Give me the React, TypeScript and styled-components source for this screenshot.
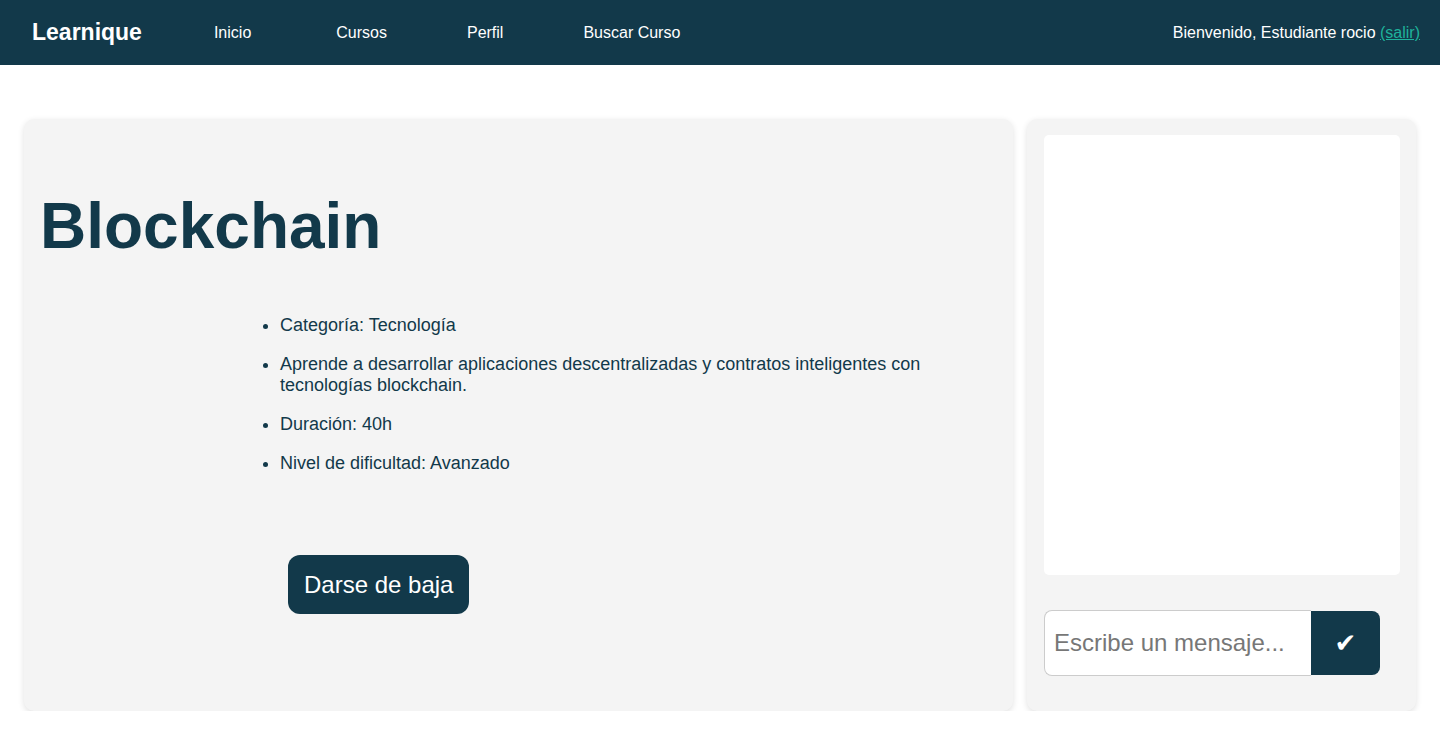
import React from "react";
import styled, { createGlobalStyle } from "styled-components";

const DARK = "#12394a";

const Global = createGlobalStyle`
  html, body { margin: 0; padding: 0; background: #ffffff; }
  body { font-family: "Liberation Sans", Arial, Helvetica, sans-serif; }
  * { box-sizing: border-box; }
`;

const Header = styled.header`
  height: 65px;
  background: ${DARK};
  display: flex;
  align-items: center;
  padding: 0 20px 0 32px;
  color: #ffffff;
`;

const Logo = styled.div`
  font-size: 23px;
  font-weight: 700;
`;

const Nav = styled.nav`
  display: flex;
  align-items: center;
  margin-left: 72px;
  gap: 80px;
`;

const NavLink = styled.a`
  color: #ffffff;
  font-size: 16px;
  text-decoration: none;
  &:first-child { margin-right: 5px; }
`;

const Welcome = styled.div`
  margin-left: auto;
  font-size: 16px;
  color: #ffffff;
`;

const Logout = styled.a`
  color: #1fb39c;
  text-decoration: underline;
`;

const Main = styled.main`
  display: flex;
  align-items: stretch;
  gap: 14px;
  padding: 54px 24px 0;
`;

const Card = styled.section`
  background: #f4f4f4;
  border-radius: 10px;
  box-shadow: 0 2px 6px rgba(0, 0, 0, 0.12);
`;

const CourseCard = styled(Card)`
  flex: 1;
  padding: 16px;
  display: flex;
  flex-direction: column;
  align-items: flex-start;
`;

const Title = styled.h1`
  margin: 54px 0 0;
  font-size: 64px;
  line-height: 74px;
  font-weight: 700;
  color: ${DARK};
`;

const Details = styled.ul`
  margin: 52px 0 0 200px;
  padding-left: 40px;
  color: ${DARK};
  font-size: 18px;
  line-height: 21px;
`;

const Item = styled.li`
  margin-bottom: 18px;
  &:last-child { margin-bottom: 0; }
`;

const DropButton = styled.button`
  margin: 81px 0 0 248px;
  background: ${DARK};
  color: #ffffff;
  border: none;
  border-radius: 12px;
  padding: 16px;
  font-family: "Liberation Sans", Arial, sans-serif;
  font-size: 24px;
  line-height: 27px;
  cursor: pointer;
`;

const ChatCard = styled(Card)`
  width: 389px;
  flex: none;
  padding: 16px 16px 35px 17px;
  display: flex;
  flex-direction: column;
`;

const Messages = styled.div`
  height: 440px;
  background: #ffffff;
  border-radius: 5px;
`;

const InputRow = styled.form`
  display: flex;
  align-items: center;
  margin-top: 35px;
`;

const MessageInput = styled.input`
  width: 267px;
  height: 66px;
  border: 1px solid #cccccc;
  border-right: none;
  border-radius: 8px 0 0 8px;
  padding: 0 9px;
  font-family: "Liberation Sans", Arial, sans-serif;
  font-size: 24px;
  color: #333333;
  background: #ffffff;
  outline: none;
  &::placeholder { color: #777777; }
`;

const SendButton = styled.button`
  width: 69px;
  height: 64px;
  border: none;
  border-radius: 0 8px 8px 0;
  background: ${DARK};
  color: #ffffff;
  font-family: "DejaVu Sans", sans-serif;
  font-size: 26px;
  line-height: 1;
  display: flex;
  align-items: center;
  justify-content: center;
  cursor: pointer;
`;

export default function App() {
  return (
    <>
      <Global />
      <Header>
        <Logo>Learnique</Logo>
        <Nav>
          <NavLink href="#">Inicio</NavLink>
          <NavLink href="#">Cursos</NavLink>
          <NavLink href="#">Perfil</NavLink>
          <NavLink href="#">Buscar Curso</NavLink>
        </Nav>
        <Welcome>
          Bienvenido, Estudiante rocio <Logout href="#">(salir)</Logout>
        </Welcome>
      </Header>
      <Main>
        <CourseCard>
          <Title>Blockchain</Title>
          <Details>
            <Item>Categoría: Tecnología</Item>
            <Item>
              Aprende a desarrollar aplicaciones descentralizadas y contratos inteligentes con
              tecnologías blockchain.
            </Item>
            <Item>Duración: 40h</Item>
            <Item>Nivel de dificultad: Avanzado</Item>
          </Details>
          <DropButton type="button">Darse de baja</DropButton>
        </CourseCard>
        <ChatCard>
          <Messages />
          <InputRow onSubmit={(e) => e.preventDefault()}>
            <MessageInput placeholder="Escribe un mensaje..." />
            <SendButton type="submit">✔</SendButton>
          </InputRow>
        </ChatCard>
      </Main>
    </>
  );
}
